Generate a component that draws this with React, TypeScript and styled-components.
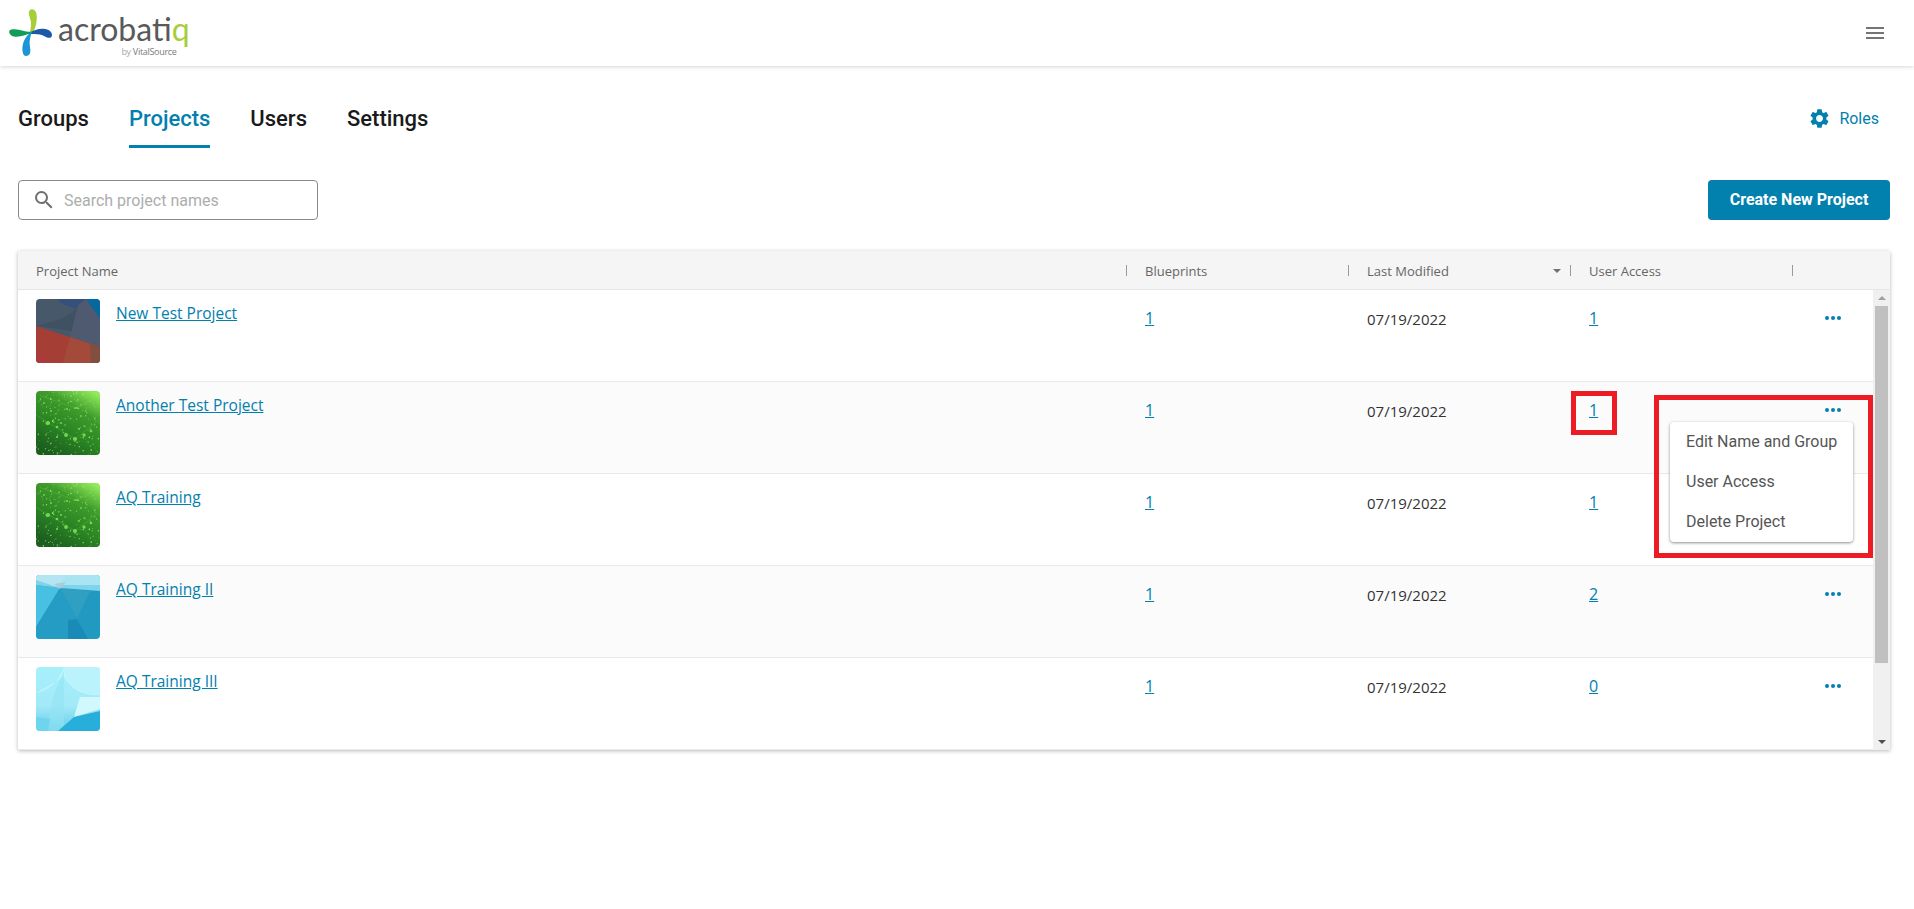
import React from "react";
import styled, { createGlobalStyle } from "styled-components";
import { MdMenu, MdSearch, MdSettings } from "react-icons/md";

const Global = createGlobalStyle`
  html, body { margin: 0; padding: 0; background: #fff; }
  body { font-family: Roboto, "Liberation Sans", sans-serif; }
  #root { min-height: 100vh; }
  * { box-sizing: border-box; }
`;

const TopBar = styled.header`
  height: 66px;
  display: flex;
  align-items: flex-start;
  justify-content: space-between;
  padding: 8px 27px 0 8px;
  background: #fff;
  box-shadow: 0 1px 4px rgba(0, 0, 0, 0.16);
`;
const Logo = styled.div`
  display: flex;
  align-items: flex-start;
  gap: 4px;
`;
const LogoWords = styled.div`
  display: flex;
  flex-direction: column;
  align-items: flex-end;
  padding-top: 8px;
`;
const Word = styled.div`
  font-family: Lato, sans-serif;
  font-size: 32px;
  font-weight: 400;
  line-height: 26px;
  color: #58595b;
  & > span { color: #a6ce39; }
`;
const ByLine = styled.div`
  font-family: "Open Sans", sans-serif;
  font-size: 9px;
  line-height: 9px;
  margin: 5px 13px 0 0;
  color: #a8a8a8;
  letter-spacing: -0.3px;
  & > b { color: #7a7b7d; font-weight: 400; }
`;
const MenuButton = styled.div`
  margin-top: 13px;
  color: #757575;
  display: flex;
`;
const Main = styled.main`
  padding: 40px 24px 0 18px;
`;
const Nav = styled.nav`
  display: flex;
  justify-content: space-between;
  align-items: flex-start;
  padding-right: 11px;
`;
const Tabs = styled.div`
  display: flex;
  gap: 40px;
`;
const Tab = styled.a<{ $active?: boolean }>`
  display: block;
  font-size: 22px;
  font-weight: 500;
  line-height: 24px;
  padding: 1px 0 14px;
  color: ${(p) => (p.$active ? "#0280ae" : "#1a1a1a")};
  border-bottom: 3px solid ${(p) => (p.$active ? "#0280ae" : "transparent")};
`;
const RolesLink = styled.a`
  display: flex;
  align-items: center;
  gap: 8px;
  height: 24px;
  font-size: 16px;
  color: #0280ae;
`;
const Toolbar = styled.div`
  margin-top: 32px;
  display: flex;
  justify-content: space-between;
`;
const Search = styled.div`
  width: 300px;
  height: 40px;
  display: flex;
  align-items: center;
  gap: 8px;
  padding-left: 13px;
  border: 1px solid #8a8a8a;
  border-radius: 4px;
  color: #6f6f6f;
`;
const Placeholder = styled.span`
  font-size: 16px;
  color: #adadad;
`;
const PrimaryButton = styled.button`
  width: 182px;
  height: 40px;
  border: 0;
  padding: 0 0 2px;
  border-radius: 4px;
  background: #0280ae;
  color: #fff;
  font-family: Roboto, sans-serif;
  font-size: 16px;
  font-weight: 700;
`;
const Table = styled.section`
  margin-top: 31px;
  background: #fff;
  box-shadow: 0 1px 4px rgba(0, 0, 0, 0.28);
`;
const Columns = `
  display: grid;
  grid-template-columns: 1109px 222px 222px 222px 1fr;
`;
const HeadRow = styled.div`
  ${Columns}
  height: 39px;
  background: #f5f5f5;
  border-bottom: 1px solid #e6e6e6;
`;
const HeadCell = styled.div`
  display: flex;
  align-items: center;
  padding: 1px 0 0 18px;
  font-family: "Open Sans", sans-serif;
  font-size: 13px;
  color: #666;
`;
const Caret = styled.span`
  margin-left: auto;
  margin-right: 9px;
  width: 0;
  height: 0;
  border-left: 4px solid transparent;
  border-right: 4px solid transparent;
  border-top: 4px solid #707070;
`;
const Sep = styled.span`
  margin-left: auto;
  margin-top: -1px;
  width: 1px;
  height: 11px;
  background: #9a9a9a;
  ${Caret} + & { margin-left: 0; }
`;
const Body = styled.div`
  display: flex;
  height: 460px;
`;
const Rows = styled.div`
  width: 1855px;
`;
const Row = styled.div<{ $shade?: boolean }>`
  ${Columns}
  position: relative;
  height: 92px;
  background: ${(p) => (p.$shade ? "#fbfbfb" : "#fff")};
  border-bottom: 1px solid #e9e9e9;
`;
const NameCell = styled.div`
  display: flex;
  gap: 16px;
  padding: 9px 0 0 18px;
`;
const ThumbBox = styled.svg`
  width: 64px;
  height: 64px;
  border-radius: 4px;
  display: block;
  flex: none;
`;
const NameLink = styled.a`
  font-family: "Open Sans", sans-serif;
  font-size: 15.5px;
  font-weight: 500;
  line-height: 20px;
  margin-top: 4px;
  height: 20px;
  color: #0280ae;
  text-decoration: underline;
`;
const Cell = styled.div`
  padding: 18px 0 0 18px;
  font-family: "Open Sans", sans-serif;
  font-size: 15px;
  line-height: 20px;
  color: #333;
`;
const DateCell = styled(Cell)`
  padding-top: 19px;
`;
const CountLink = styled.a`
  color: #0280ae;
  font-size: 16px;
  font-weight: 500;
  text-decoration: underline;
`;
const DotsCell = styled.div`
  display: flex;
  gap: 2px;
  padding: 26px 0 0 32px;
`;
const Dot = styled.span`
  width: 4px;
  height: 4px;
  border-radius: 50%;
  background: #0280ae;
`;
const ContextMenu = styled.ul`
  position: absolute;
  z-index: 3;
  left: 1652px;
  top: 40px;
  width: 183px;
  margin: 0;
  padding: 0;
  list-style: none;
  background: #fff;
  border-radius: 4px;
  box-shadow: 0 1px 3px rgba(0, 0, 0, 0.45);
`;
const ContextItem = styled.li`
  height: 40px;
  display: flex;
  align-items: center;
  padding: 0 0 2px 16px;
  font-size: 16px;
  color: #555;
  white-space: nowrap;
`;
const Callout = styled.div`
  position: absolute;
  z-index: 4;
  border: 5px solid #ed1c24;
  pointer-events: none;
`;
const CountCallout = styled(Callout)`
  left: 1553px;
  top: 9px;
  width: 46px;
  height: 44px;
`;
const MenuCallout = styled(Callout)`
  left: 1636px;
  top: 13px;
  width: 219px;
  height: 163px;
`;
const Scrollbar = styled.div`
  width: 17px;
  background: #f0f0f0;
  display: flex;
  flex-direction: column;
  align-items: center;
`;
const ScrollArrow = styled.span<{ $down?: boolean }>`
  flex: none;
  width: 0;
  height: 0;
  margin: ${(p) => (p.$down ? "auto 0 6px" : "6px 0 0")};
  border-left: 4px solid transparent;
  border-right: 4px solid transparent;
  border-${(p) => (p.$down ? "top" : "bottom")}: 4px solid ${(p) => (p.$down ? "#505050" : "#a0a0a0")};
`;
const ScrollThumb = styled.div`
  width: 13px;
  height: 357px;
  margin-top: 6px;
  background: #c0c0c0;
`;

function seeded(n: number, seed: number) {
  const out: { x: number; y: number; r: number; o: number }[] = [];
  let s = seed;
  const next = () => {
    s = (s * 16807) % 2147483647;
    return s / 2147483647;
  };
  for (let i = 0; i < n; i++) {
    out.push({ x: next() * 64, y: next() * 64, r: 0.3 + next() * 0.5, o: 0.5 + next() * 0.5 });
  }
  return out;
}
const greenDots = seeded(190, 4711);
const bigDots = [
  [12, 32, 2.1], [21, 36, 1.3], [30, 44, 1.9], [39, 48, 2.1], [48, 44, 1.7], [55, 40, 1.3],
  [15, 20, 1], [31, 18, 1.1], [40, 17, 1.1], [54, 10, 1.1], [21, 46, 1.1], [35, 5, 1], [45, 25, 0.9],
  [25, 32, 1], [43, 38, 1], [8, 12, 0.9],
];

const Thumb: React.FC<{ kind: "red" | "green" | "teal" | "sky"; id: string }> = ({ kind, id }) => {
  if (kind === "red") {
    return (
      <ThumbBox viewBox="0 0 64 64">
        <rect width="64" height="64" fill="#47586b" />
        <polygon points="0,27 64,48 64,64 0,64" fill="#a53f35" />
        <polygon points="22,0 50,0 40,10 25,4" fill="#35507a" />
        <polygon points="25,20 44,8 36,32 0,27" fill="#3f5163" />
        <polygon points="50,0 64,0 64,20" fill="#05699f" />
        <polygon points="50,0 64,20 64,48 34,38 42,6" fill="#4f5a70" />
        <polygon points="34,38 64,48 64,64 27,64" fill="#a44a3a" />
        <polygon points="54,44 64,48 64,64 55,64" fill="#814e3f" />
        <polygon points="0,45 14,64 0,64" fill="#ab3a3a" />
      </ThumbBox>
    );
  }
  if (kind === "green") {
    return (
      <ThumbBox viewBox="0 0 64 64">
        <defs>
          <linearGradient id={id} x1="0.85" y1="0" x2="0.3" y2="1">
            <stop offset="0" stopColor="#8fe85a" />
            <stop offset="0.3" stopColor="#3f9c2c" />
            <stop offset="0.65" stopColor="#2a8324" />
            <stop offset="1" stopColor="#1b5e20" />
          </linearGradient>
        </defs>
        <rect width="64" height="64" fill={`url(#${id})`} />
        <g stroke="#8fe85a" strokeWidth="0.4" opacity="0.5" fill="none">
          <path d="M0 24 L39 48 L64 28" />
          <path d="M5 5 L40 17 L64 5" />
        </g>
        {greenDots.map((d, i) => (
          <circle key={i} cx={d.x} cy={d.y} r={d.r} fill="#a4f06a" opacity={d.o} />
        ))}
        {bigDots.map(([x, y, r], i) => (
          <circle key={i} cx={x} cy={y} r={r} fill="#72d84f" />
        ))}
      </ThumbBox>
    );
  }
  if (kind === "teal") {
    return (
      <ThumbBox viewBox="0 0 64 64">
        <rect width="64" height="64" fill="#2299c0" />
        <polygon points="0,10 24,13 0,52" fill="#48c0e2" />
        <polygon points="24,13 54,16 41,44" fill="#2f9fc2" />
        <polygon points="0,52 24,13 41,44 32,64 0,64" fill="#249cc3" />
        <polygon points="32,45 41,44 52,64 32,64" fill="#1a8bb8" />
        <polygon points="0,0 64,0 64,16 24,13 0,10" fill="#7fd3ea" />
        <polygon points="0,0 30,0 24,13 0,5" fill="#b4e5f3" />
        <polygon points="30,0 64,0 64,10 22,10" fill="#a9e4f3" />
        <polygon points="18,9 30,7 24,14" fill="#a9cdd8" />
      </ThumbBox>
    );
  }
  return (
    <ThumbBox viewBox="0 0 64 64">
      <defs>
        <linearGradient id={id} x1="0" y1="0" x2="0" y2="1">
          <stop offset="0" stopColor="#a6f0fb" />
          <stop offset="0.6" stopColor="#a3e9f8" />
          <stop offset="1" stopColor="#64cdea" />
        </linearGradient>
      </defs>
      <rect width="64" height="64" fill={`url(#${id})`} />
      <path d="M0 26 Q20 22 28 0 L64 0 L64 28 Q40 30 28 10 Z" fill="#c6f6fd" opacity="0.8" />
      <path d="M28 0 Q30 26 64 28 L64 0 Z" fill="#baf3fb" />
      <path d="M12 64 Q14 30 28 4 L28 64 Z" fill="#93e2f4" opacity="0.6" />
      <polygon points="38,50 44,30 64,30 64,42" fill="#d0f8fd" />
      <polygon points="22,64 38,50 64,44 64,64" fill="#27aedb" />
      <polygon points="0,50 14,52 12,64 0,64" fill="#6ed5ee" />
    </ThumbBox>
  );
};

const LogoMark = () => (
  <svg width="46" height="50" viewBox="8 8 46 50" aria-hidden>
    <path d="M33 33C36 27 37.5 20 36.5 14C36 9.5 30.5 7.5 29 11.5C28 15 31 19 31 23C31 27 30.5 30 29.5 33Z" fill="#a6ce39" />
    <path d="M29 33C34 30 40 28 45 29C49 29.5 52 32 52 35C52 38.5 48 38.5 45 36.5C40 34 35 33.5 29 34.5Z" fill="#1c5aa6" />
    <path d="M32 33C27 34.5 20 37.5 14 36.5C10 36 8.5 32 9.5 30.5C11 28.5 16 29 20 30C24 31 28 32 32 32Z" fill="#0f9d58" />
    <path d="M31.5 32.5C30 38 29 42 30 47C31 52 30 56 26 56C23 56 22 51 22.5 47C23 41 26 36 31 32Z" fill="#1b95d6" />
  </svg>
);

const Dots = () => (
  <DotsCell>
    <Dot />
    <Dot />
    <Dot />
  </DotsCell>
);

const projects = [
  { name: "New Test Project", thumb: "red", access: "1" },
  { name: "Another Test Project", thumb: "green", access: "1" },
  { name: "AQ Training", thumb: "green", access: "1" },
  { name: "AQ Training II", thumb: "teal", access: "2" },
  { name: "AQ Training III", thumb: "sky", access: "0" },
] as const;

export default function App() {
  return (
    <>
      <Global />
      <TopBar>
        <Logo>
          <LogoMark />
          <LogoWords>
            <Word>
              acrobat<span>iq</span>
            </Word>
            <ByLine>
              by <b>VitalSource</b>
            </ByLine>
          </LogoWords>
        </Logo>
        <MenuButton>
          <MdMenu size={24} />
        </MenuButton>
      </TopBar>
      <Main>
        <Nav>
          <Tabs>
            <Tab>Groups</Tab>
            <Tab $active>Projects</Tab>
            <Tab>Users</Tab>
            <Tab>Settings</Tab>
          </Tabs>
          <RolesLink>
            <MdSettings size={23} />
            Roles
          </RolesLink>
        </Nav>
        <Toolbar>
          <Search>
            <MdSearch size={24} />
            <Placeholder>Search project names</Placeholder>
          </Search>
          <PrimaryButton>Create New Project</PrimaryButton>
        </Toolbar>
        <Table>
          <HeadRow>
            <HeadCell>
              Project Name
              <Sep />
            </HeadCell>
            <HeadCell>
              Blueprints
              <Sep />
            </HeadCell>
            <HeadCell>
              Last Modified
              <Caret />
              <Sep />
            </HeadCell>
            <HeadCell>
              User Access
              <Sep />
            </HeadCell>
            <HeadCell />
          </HeadRow>
          <Body>
            <Rows>
              {projects.map((p, i) => (
                <Row key={p.name} $shade={i % 2 === 1}>
                  <NameCell>
                    <Thumb kind={p.thumb} id={`thumb-${i}`} />
                    <NameLink>{p.name}</NameLink>
                  </NameCell>
                  <Cell>
                    <CountLink>1</CountLink>
                  </Cell>
                  <DateCell>07/19/2022</DateCell>
                  <Cell>
                    <CountLink>{p.access}</CountLink>
                  </Cell>
                  <Dots />
                  {i === 1 && (
                    <>
                      <ContextMenu>
                        <ContextItem>Edit Name and Group</ContextItem>
                        <ContextItem>User Access</ContextItem>
                        <ContextItem>Delete Project</ContextItem>
                      </ContextMenu>
                      <CountCallout />
                      <MenuCallout />
                    </>
                  )}
                </Row>
              ))}
            </Rows>
            <Scrollbar>
              <ScrollArrow />
              <ScrollThumb />
              <ScrollArrow $down />
            </Scrollbar>
          </Body>
        </Table>
      </Main>
    </>
  );
}
